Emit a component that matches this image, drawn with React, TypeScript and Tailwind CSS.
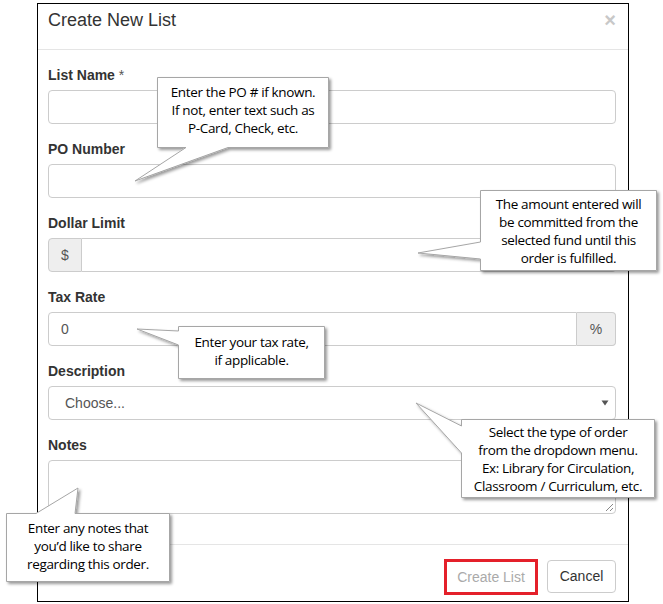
import React from "react"

const sans = { fontFamily: '"Liberation Sans", Arial, sans-serif' }

function Label({ children }: { children: React.ReactNode }) {
  return <div className="h-[20px] mb-[5px] text-[14px] leading-[20px] font-bold text-[#333]">{children}</div>
}

function Callout({ left, top, width, lines }: { left: number; top: number; width: number; lines: string[] }) {
  return (
    <div
      className="absolute text-center text-[13.5px] leading-[18px] text-black"
      style={{ left, top, width, fontFamily: '"Open Sans", "Liberation Sans", sans-serif', letterSpacing: "-0.35px" }}
    >
      {lines.map((l, i) => (
        <div key={i}>{l}</div>
      ))}
    </div>
  )
}

export default function App() {
  return (
    <div className="relative w-[663px] h-[604px] bg-white overflow-hidden" style={sans}>
      {/* Modal */}
      <div className="ml-[37px] mt-[3px] w-[592px] h-[599px] border border-black bg-white flex flex-col">
        {/* Header */}
        <div className="h-[46px] shrink-0 flex items-start justify-between pt-[6px] pl-[10px] pr-[12px] border-b border-[#e5e5e5]">
          <span className="text-[18px] text-[#333] leading-[18px] mt-[1px]">Create New List</span>
          <span className="text-[20px] font-bold text-[#c8c8c8] leading-[20px]">×</span>
        </div>

        {/* Body */}
        <div className="pt-[15px] pl-[10px] pr-[12px] pb-[15px] border-b border-[#e5e5e5]">
          <div className="mb-[15px]">
            <Label>
              List Name <span className="font-normal text-[#555]">*</span>
            </Label>
            <div className="h-[34px] border border-[#ccc] rounded-[4px]" />
          </div>
          <div className="mb-[15px]">
            <Label>PO Number</Label>
            <div className="h-[34px] border border-[#ccc] rounded-[4px]" />
          </div>
          <div className="mb-[15px]">
            <Label>Dollar Limit</Label>
            <div className="flex h-[34px]">
              <div className="w-[34px] bg-[#eee] border border-[#ccc] rounded-l-[4px] flex items-center justify-center text-[14px] text-[#555]">
                $
              </div>
              <div className="flex-1 border border-l-0 border-[#ccc] rounded-r-[4px]" />
            </div>
          </div>
          <div className="mb-[15px]">
            <Label>Tax Rate</Label>
            <div className="flex h-[34px]">
              <div className="flex-1 border border-[#ccc] rounded-l-[4px] flex items-center pl-[12px] text-[14px] text-[#555]">0</div>
              <div className="w-[39px] bg-[#eee] border border-l-0 border-[#ccc] rounded-r-[4px] flex items-center justify-center text-[14px] text-[#555]">
                %
              </div>
            </div>
          </div>
          <div className="mb-[15px]">
            <Label>Description</Label>
            <div className="h-[34px] border border-[#ccc] rounded-[4px] flex items-center justify-between pl-[16px] pr-[6px] text-[14px] text-[#555]">
              <span>Choose...</span>
              <svg width="8" height="6" viewBox="0 0 8 6">
                <path d="M0.5 0.5 L7.5 0.5 L4 5.5 Z" fill="#555" />
              </svg>
            </div>
          </div>
          <div className="mb-[15px]">
            <Label>Notes</Label>
            <div className="relative h-[54px] border border-[#ccc] rounded-[4px]">
              <svg className="absolute right-[1px] bottom-[1px]" width="9" height="9" viewBox="0 0 9 9">
                <path d="M8 1 L1 8 M8 5 L5 8" stroke="#888" strokeWidth="1" />
              </svg>
            </div>
          </div>
        </div>

        {/* Footer */}
        <div className="flex justify-end items-start gap-[9px] pt-[15px] pr-[12px]">
          <div className="-mt-[1px] border-[3px] border-[#e4202a]">
            <button className="h-[30px] w-[88px] text-[14px] text-[#aaa] bg-white">Create List</button>
          </div>
          <button className="h-[33px] w-[69px] border border-[#ccc] rounded-[4px] text-[14px] text-[#333] bg-white">Cancel</button>
        </div>
      </div>

      {/* Annotation callouts */}
      <svg className="absolute inset-0 pointer-events-none" width="663" height="604" viewBox="0 0 663 604">
        <defs>
          <filter id="sh" x="-10%" y="-10%" width="130%" height="130%">
            <feDropShadow dx="2" dy="2" stdDeviation="1.6" floodColor="#000" floodOpacity="0.4" />
          </filter>
        </defs>
        <g fill="#fff" stroke="#a6a6a6" strokeWidth="1" filter="url(#sh)">
          <path d="M157.5,77.5 H328.5 V147.5 H228 L135,181 L186,147.5 H157.5 Z" />
          <path d="M480.5,190.5 H656.5 V270.5 H480.5 V259 L418,253 L480.5,242 Z" />
          <path d="M178.5,326.5 H324.5 V378.5 H178.5 V345 L137,329 L178.5,331 Z" />
          <path d="M461.5,419.5 H654.5 V497.5 H461.5 V453 L416,403 L461.5,426 Z" />
          <path d="M6.5,513.5 H36 L78,488 L75,513.5 H169.5 V581.5 H6.5 Z" />
        </g>
      </svg>

      <Callout left={157} top={83} width={172} lines={["Enter the PO # if known.", "If not, enter text such as", "P-Card, Check, etc."]} />
      <Callout
        left={480}
        top={195}
        width={177}
        lines={["The amount entered will", "be committed from the", "selected fund until this", "order is fulfilled."]}
      />
      <Callout left={178} top={333} width={147} lines={["Enter your tax rate,", "if applicable."]} />
      <Callout
        left={461}
        top={423}
        width={194}
        lines={["Select the type of order", "from the dropdown menu.", "Ex: Library for Circulation,", "Classroom / Curriculum, etc."]}
      />
      <Callout left={6} top={519} width={164} lines={["Enter any notes that", "you’d like to share", "regarding this order."]} />
    </div>
  )
}
